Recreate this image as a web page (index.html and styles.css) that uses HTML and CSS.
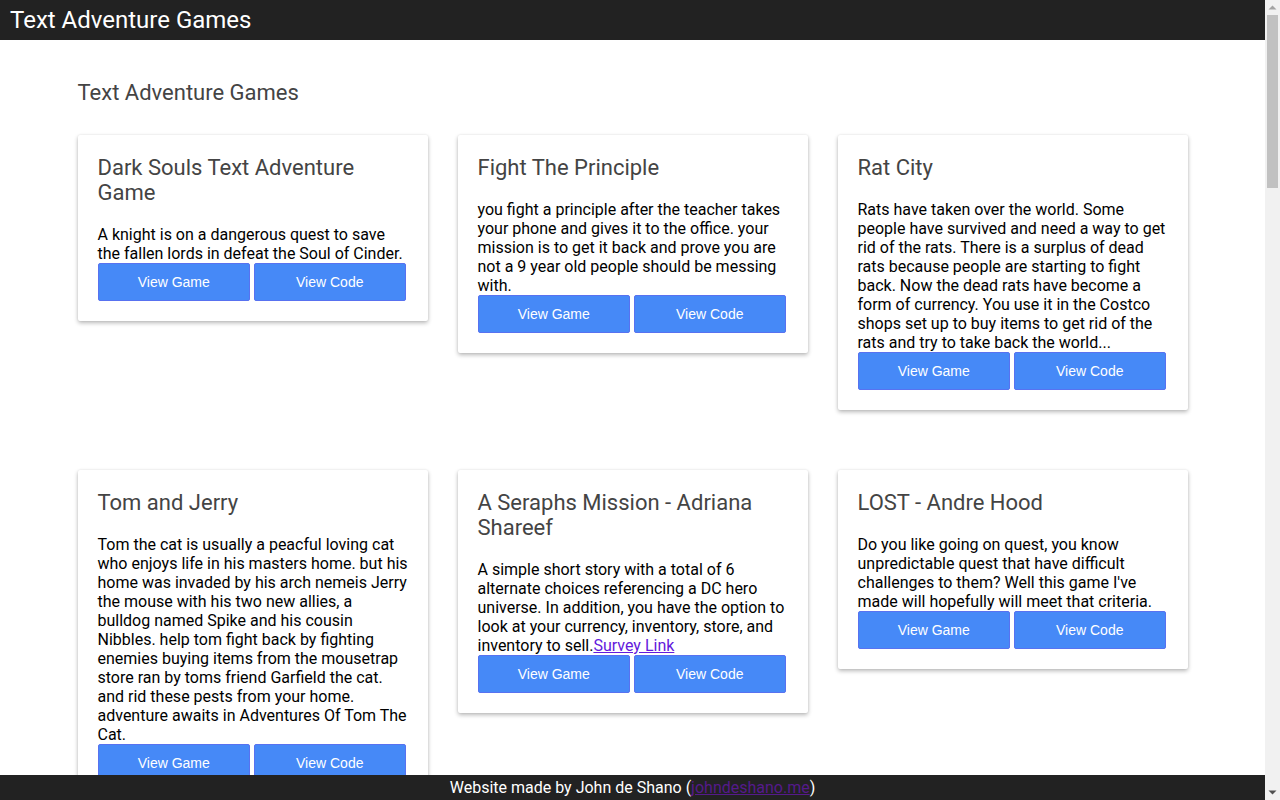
FILE: index.html
```html
<!DOCTYPE html>
<html lang="en">
<head>
<meta charset="utf-8">
<title>Text Adventure Games</title>
<link rel="stylesheet" href="styles.css">
</head>
<body>
<div class="page">
<header class="topbar">Text Adventure Games</header>
<main class="container">
  <h1 class="page-title">Text Adventure Games</h1>
  <div class="grid">
    <div class="card">
      <h2 class="card-title">Dark Souls Text Adventure Game</h2>
      <p class="card-text">A knight is on a dangerous quest to save the fallen lords in defeat the Soul of Cinder.</p>
      <div class="actions"><button class="btn">View Game</button> <button class="btn">View Code</button></div>
    </div>
    <div class="card">
      <h2 class="card-title">Fight The Principle</h2>
      <p class="card-text">you fight a principle after the teacher takes your phone and gives it to the office. your mission is to get it back and prove you are not a 9 year old people should be messing with.</p>
      <div class="actions"><button class="btn">View Game</button> <button class="btn">View Code</button></div>
    </div>
    <div class="card">
      <h2 class="card-title">Rat City</h2>
      <p class="card-text">Rats have taken over the world. Some people have survived and need a way to get rid of the rats. There is a surplus of dead rats because people are starting to fight back. Now the dead rats have become a form of currency. You use it in the Costco shops set up to buy items to get rid of the rats and try to take back the world...</p>
      <div class="actions"><button class="btn">View Game</button> <button class="btn">View Code</button></div>
    </div>
    <div class="card">
      <h2 class="card-title">Tom and Jerry</h2>
      <p class="card-text">Tom the cat is usually a peacful loving cat who enjoys life in his masters home. but his home was invaded by his arch nemeis Jerry the mouse with his two new allies, a bulldog named Spike and his cousin Nibbles. help tom fight back by fighting enemies buying items from the mousetrap store ran by toms friend Garfield the cat. and rid these pests from your home. adventure awaits in Adventures Of Tom The Cat.</p>
      <div class="actions"><button class="btn">View Game</button> <button class="btn">View Code</button></div>
    </div>
    <div class="card">
      <h2 class="card-title">A Seraphs Mission - Adriana Shareef</h2>
      <p class="card-text">A simple short story with a total of 6 alternate choices referencing a DC hero universe. In addition, you have the option to look at your currency, inventory, store, and inventory to sell.<a href="#survey" class="link">Survey Link</a></p>
      <div class="actions"><button class="btn">View Game</button> <button class="btn">View Code</button></div>
    </div>
    <div class="card">
      <h2 class="card-title">LOST - Andre Hood</h2>
      <p class="card-text">Do you like going on quest, you know unpredictable quest that have difficult challenges to them? Well this game I've made will hopefully will meet that criteria.</p>
      <div class="actions"><button class="btn">View Game</button> <button class="btn">View Code</button></div>
    </div>
    <div class="card">
      <h2 class="card-title">Escape The School</h2>
      <p class="card-text">You wake up locked inside the school after hours. Find the keys, avoid the janitor and make it out before morning.</p>
      <div class="actions"><button class="btn">View Game</button> <button class="btn">View Code</button></div>
    </div>
    <div class="card">
      <h2 class="card-title">Space Station Omega</h2>
      <p class="card-text">The station's oxygen is running low and the crew is missing. Explore the modules, collect parts and repair the life support system before it is too late.</p>
      <div class="actions"><button class="btn">View Game</button> <button class="btn">View Code</button></div>
    </div>
    <div class="card">
      <h2 class="card-title">Zombie Mall</h2>
      <p class="card-text">Survive a night in a mall overrun by zombies. Trade supplies with other survivors, upgrade your weapons and find a way to the roof for rescue.</p>
      <div class="actions"><button class="btn">View Game</button> <button class="btn">View Code</button></div>
    </div>
  </div>
</main>
</div>
<footer class="footer">Website made by John de Shano (<a href="#home" class="footer-link">johndeshano.me</a>)</footer>
<div class="scrollbar" aria-hidden="true">
  <div class="sb-btn sb-up"><svg width="15" height="15" viewBox="0 0 15 15"><path d="M3.5 9.5 L7.5 5.5 L11.5 9.5 Z" fill="#a3a3a3"/></svg></div>
  <div class="sb-track"><div class="sb-thumb"></div></div>
  <div class="sb-btn sb-down"><svg width="15" height="15" viewBox="0 0 15 15"><path d="M3.5 5.5 L7.5 9.5 L11.5 5.5 Z" fill="#505050"/></svg></div>
</div>
</body>
</html>
```

FILE: styles.css
```css
html, body {
  margin: 0;
  padding: 0;
}
body {
  font-family: Roboto, "Liberation Sans", Arial, sans-serif;
  color: #000;
  background: #fff;
}
.page {
  margin-right: 15px;
}
.topbar {
  height: 40px;
  background: #222;
  color: #fff;
  font-size: 24px;
  line-height: 40px;
  padding-left: 10px;
}
.container {
  width: 1110px;
  margin: 0 auto;
  padding: 40px 15px 80px;
}
.page-title {
  margin: 0 0 30px;
  font-size: 22px;
  line-height: 25px;
  font-weight: 400;
  color: #444;
}
.grid {
  display: grid;
  grid-template-columns: repeat(3, 350px);
  column-gap: 30px;
  row-gap: 60px;
  align-items: start;
}
.card {
  background: #fff;
  padding: 20px;
  border-radius: 2px;
  box-shadow: 0 2px 4px rgba(0, 0, 0, 0.28), 0 0 2px rgba(0, 0, 0, 0.08);
}
.card-title {
  margin: 0 0 20px;
  font-size: 22px;
  line-height: 25px;
  font-weight: 400;
  color: #444;
}
.card-text {
  margin: 0 -1px 0 0;
  font-size: 16px;
  line-height: 19px;
}
.link {
  color: #6419dc;
}
.actions {
  display: flex;
  gap: 3.5px;
}
.btn {
  width: 152.5px;
  height: 38px;
  background: #4689f7;
  color: #fff;
  border: 1px solid #5872f0;
  border-radius: 2px;
  font-family: "Liberation Sans", Arial, sans-serif;
  font-size: 14px;
  padding: 0;
  cursor: pointer;
}
.footer {
  position: fixed;
  left: 0;
  right: 15px;
  bottom: 0;
  height: 25px;
  line-height: 25px;
  background: #222;
  color: #fff;
  text-align: center;
  font-size: 16px;
}
.footer-link {
  color: #551a8b;
}
.scrollbar {
  position: fixed;
  top: 0;
  right: 0;
  bottom: 0;
  width: 15px;
  background: #f1f1f1;
  display: flex;
  flex-direction: column;
}
.sb-btn {
  height: 15px;
  flex: none;
}
.sb-btn svg {
  display: block;
}
.sb-track {
  flex: 1;
  padding: 0 2px;
}
.sb-thumb {
  height: 173px;
  background: #c1c1c1;
}
```
